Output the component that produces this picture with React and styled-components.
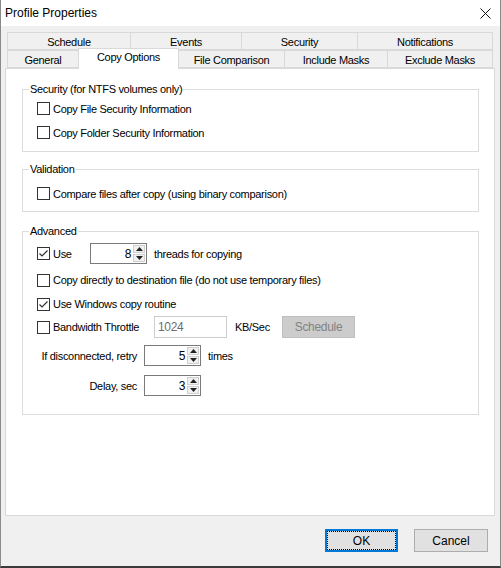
import React from "react";
import styled, { createGlobalStyle } from "styled-components";

const Global = createGlobalStyle`
  html, body { margin: 0; padding: 0; background: #f0f0f0; }
  body { font-family: "Liberation Sans", Arial, sans-serif; font-size: 11px; letter-spacing: -0.3px; color: #000; }
  * { box-sizing: border-box; }
`;

const Window = styled.div`
  width: 501px;
  height: 568px;
  display: flex;
  flex-direction: column;
  border-left: 1px solid #8a8a8a;
  border-right: 1px solid #8a8a8a;
  border-bottom: 2px solid #3a3a3a;
  background: #f0f0f0;
`;

const TitleBar = styled.div`
  height: 26px;
  flex: none;
  background: #fff;
  display: flex;
  align-items: center;
  justify-content: space-between;
  padding: 0 9px 0 4px;
  font-size: 12px;
  letter-spacing: 0;
`;

const CloseIcon = () => (
  <svg width="11" height="11" viewBox="0 0 11 11">
    <path d="M0.5 0.5 L10.5 10.5 M10.5 0.5 L0.5 10.5" stroke="#111" strokeWidth="1" />
  </svg>
);

const Body = styled.div`
  flex: 1;
  display: flex;
  flex-direction: column;
  padding: 6px 5px 0 4px;
`;

const TabStrip = styled.div`
  margin-left: 2px;
  width: 486px;
  display: flex;
  flex-direction: column;
`;

const TabRow = styled.div`
  display: flex;
  align-items: flex-end;
  height: 18px;
`;

const Tab = styled.div`
  width: ${p => p.$w + 1}px;
  height: ${p => (p.$active ? 21 : 18)}px;
  margin-left: -1px;
  margin-bottom: ${p => (p.$active ? -1 : 0)}px;
  &:first-child { margin-left: 0; }
  border: 1px solid #d9d9d9;
  border-bottom: ${p => (p.$active ? "none" : "1px solid #d9d9d9")};
  background: ${p => (p.$active ? "#fff" : "#f0f0f0")};
  position: relative;
  z-index: ${p => (p.$active ? 2 : 1)};
  display: flex;
  align-items: ${p => (p.$active ? "flex-start" : "center")};
  padding-top: ${p => (p.$active ? 2 : 1)}px;
  justify-content: center;
  white-space: nowrap;
`;

const Panel = styled.div`
  height: 448px;
  width: 490px;
  flex: none;
  background: #fff;
  border: 1px solid #d9d9d9;
  padding: 20px 15px 0 16px;
  display: flex;
  flex-direction: column;
`;

const GroupBox = styled.div`
  position: relative;
  height: ${p => p.$h}px;
  margin-top: ${p => p.$mt}px;
  border: 1px solid #dcdcdc;
  padding: ${p => p.$pt}px 14px 0 14px;
  display: flex;
  flex-direction: column;
  &:first-child { margin-top: 0; }
`;

const Caption = styled.span`
  position: absolute;
  left: 6px;
  top: -8px;
  background: #fff;
  padding: 0 1px;
  line-height: 14px;
`;

const Row = styled.div`
  display: flex;
  align-items: center;
  height: ${p => p.$h}px;
  margin-top: ${p => p.$mt || 0}px;
  white-space: nowrap;
`;

const Box = styled.span`
  width: 13px;
  height: 13px;
  flex: none;
  border: 1px solid #333;
  background: #fff;
  display: flex;
  align-items: center;
  justify-content: center;
  margin-right: 3px;
`;

const CheckText = styled.span`
  width: ${p => (p.$w ? `${p.$w}px` : "auto")};
  flex: none;
`;

const Check = ({ checked, w, children }) => (
  <>
    <Box>
      {checked && (
        <svg width="11" height="11" viewBox="0 0 11 11">
          <path d="M1.5 5.5 L4 8 L9.5 2.5" fill="none" stroke="#333" strokeWidth="1.2" />
        </svg>
      )}
    </Box>
    <CheckText $w={w}>{children}</CheckText>
  </>
);

const SpinBox = styled.div`
  width: 57px;
  height: 21px;
  border: 1px solid #7a7a7a;
  background: #fff;
  display: flex;
  align-items: center;
  justify-content: flex-end;
  padding: 1px;
  margin-right: 7px;
  flex: none;
`;

const SpinValue = styled.span`
  font-size: 12px;
  padding-right: 2px;
`;

const Arrows = styled.div`
  width: 12px;
  height: 100%;
  display: flex;
  flex-direction: column;
  gap: 1px;
`;

const ArrowBtn = styled.div`
  flex: 1;
  background: #f0f0f0;
  border: 1px solid #cfcfcf;
  display: flex;
  align-items: center;
  justify-content: center;
`;

const Spinner = ({ value }) => (
  <SpinBox>
    <SpinValue>{value}</SpinValue>
    <Arrows>
      <ArrowBtn>
        <svg width="7" height="4" viewBox="0 0 7 4"><path d="M0 4 L3.5 0 L7 4Z" fill="#222" /></svg>
      </ArrowBtn>
      <ArrowBtn>
        <svg width="7" height="4" viewBox="0 0 7 4"><path d="M0 0 L3.5 4 L7 0Z" fill="#222" /></svg>
      </ArrowBtn>
    </Arrows>
  </SpinBox>
);

const FieldLabel = styled.span`
  width: 100px;
  text-align: right;
  margin-right: 7px;
`;

const TextInput = styled.div`
  width: 73px;
  height: 22px;
  border: 1px solid #cccccc;
  background: #fff;
  color: #6d6d6d;
  font-size: 12px;
  display: flex;
  align-items: center;
  padding-left: 3px;
  flex: none;
`;

const Unit = styled.span`
  margin-left: 8px;
  width: 47px;
  flex: none;
`;

const DisabledButton = styled.div`
  width: 73px;
  height: 22px;
  background: #cccccc;
  border: 1px solid #bfbfbf;
  color: #838383;
  font-size: 12px;
  display: flex;
  align-items: center;
  justify-content: center;
`;

const ButtonBar = styled.div`
  display: flex;
  justify-content: flex-end;
  gap: 16px;
  padding: 13px 7px 0 0;
`;

const Button = styled.div`
  width: ${p => p.$w}px;
  height: 23px;
  background: #e1e1e1;
  border: ${p => (p.$default ? "2px solid #0078d7" : "1px solid #adadad")};
  padding: 1px;
  display: flex;
`;

const ButtonFace = styled.div`
  flex: 1;
  display: flex;
  align-items: center;
  justify-content: center;
  font-size: 12px;
  letter-spacing: 0;
  outline: ${p => (p.$focus ? "1px dotted #000" : "none")};
`;

const backTabs = [
  { label: "Schedule", w: 123 },
  { label: "Events", w: 111 },
  { label: "Security", w: 116 },
  { label: "Notifications", w: 135 },
];

const frontTabs = [
  { label: "General", w: 71 },
  { label: "Copy Options", w: 100, active: true },
  { label: "File Comparison", w: 106 },
  { label: "Include Masks", w: 103 },
  { label: "Exclude Masks", w: 105 },
];

export default function App() {
  return (
    <>
      <Global />
      <Window>
        <TitleBar>
          <span>Profile Properties</span>
          <CloseIcon />
        </TitleBar>
        <Body>
          <TabStrip>
            <TabRow>
              {backTabs.map(t => (
                <Tab key={t.label} $w={t.w}>{t.label}</Tab>
              ))}
            </TabRow>
            <TabRow>
              {frontTabs.map(t => (
                <Tab key={t.label} $w={t.w} $active={t.active}>{t.label}</Tab>
              ))}
            </TabRow>
          </TabStrip>
          <Panel>
            <GroupBox $h={63} $mt={0} $pt={12}>
              <Caption>Security (for NTFS volumes only)</Caption>
              <Row $h={13}><Check>Copy File Security Information</Check></Row>
              <Row $h={13} $mt={11}><Check>Copy Folder Security Information</Check></Row>
            </GroupBox>
            <GroupBox $h={43} $mt={17} $pt={17}>
              <Caption>Validation</Caption>
              <Row $h={13}><Check>Compare files after copy (using binary comparison)</Check></Row>
            </GroupBox>
            <GroupBox $h={184} $mt={19} $pt={11}>
              <Caption>Advanced</Caption>
              <Row $h={21}>
                <Check checked w={37}>Use</Check>
                <Spinner value="8" />
                <span>threads for copying</span>
              </Row>
              <Row $h={14} $mt={9}><Check>Copy directly to destination file (do not use temporary files)</Check></Row>
              <Row $h={14} $mt={10}><Check checked>Use Windows copy routine</Check></Row>
              <Row $h={22} $mt={5}>
                <Check w={101}>Bandwidth Throttle</Check>
                <TextInput>1024</TextInput>
                <Unit>KB/Sec</Unit>
                <DisabledButton>Schedule</DisabledButton>
              </Row>
              <Row $h={21} $mt={7}>
                <FieldLabel>If disconnected, retry</FieldLabel>
                <Spinner value="5" />
                <span>times</span>
              </Row>
              <Row $h={21} $mt={9}>
                <FieldLabel>Delay, sec</FieldLabel>
                <Spinner value="3" />
              </Row>
            </GroupBox>
          </Panel>
          <ButtonBar>
            <Button $w={73} $default><ButtonFace $focus>OK</ButtonFace></Button>
            <Button $w={74}><ButtonFace>Cancel</ButtonFace></Button>
          </ButtonBar>
        </Body>
      </Window>
    </>
  );
}
